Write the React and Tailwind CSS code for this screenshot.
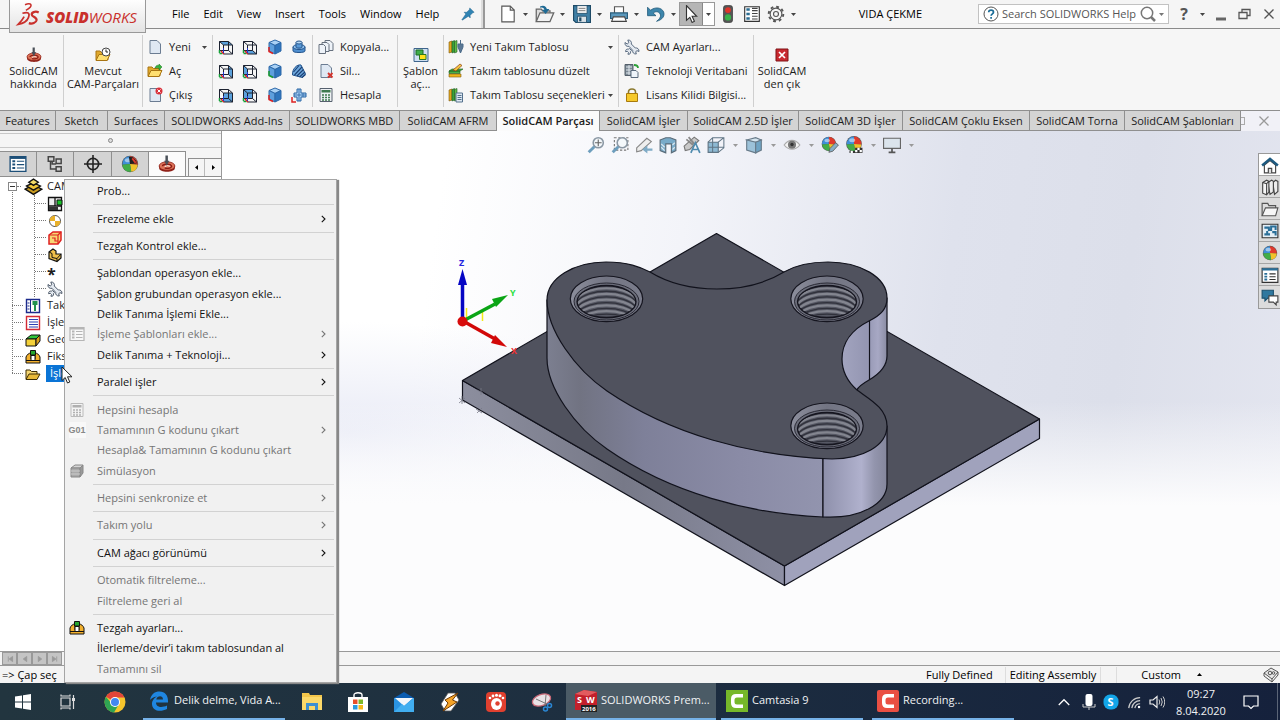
import React from "react";

/* ---------- shared icon helpers ---------- */

function Icon({ size = "size-4", box = "0 0 16 16", children }) {
  return (
    <svg viewBox={box} className={`${size} shrink-0`} fill="none" aria-hidden="true">
      {children}
    </svg>
  );
}

const Caret = ({ className = "text-[#444]" }) => (
  <svg viewBox="0 0 5 3" className={`h-[3px] w-[5px] shrink-0 ${className}`} aria-hidden="true">
    <path d="M0 0h5L2.500 3z" fill="currentColor" />
  </svg>
);

const Page = () => <path d="M3 1.500h7l3.500 3.500v9.500H3z" fill="#dfe8f3" stroke="#6b7c92" />;

const Wrench = ({ stroke = "#5a6b80" }) => (
  <g fill="#e3e9f0" stroke={stroke} strokeWidth="1">
    <path d="M1 3.500l2.200 1.500 1.600-1.300L3.800 1C6.500.800 8 3 7.300 5l4 4c2-.5 3.900 1 3.700 3.500l-2-.8-1.300 1 .6 2.300c-2.500.2-4-1.500-3.600-3.600L5 7.300C2.500 8 .500 6 1 3.500z" />
    <path d="M5.500 9.500l2 2-1 1.200c.5 1.800-1 3-2.600 2.500l.600-1.700-1.200-1.200-1.700.4c-.2-2 1.200-3 2.700-2.500z" />
  </g>
);

const Folder = () => (
  <>
    <path d="M1 13V4h4l1.500 1.500H13V13z" fill="#e0a92c" stroke="#a87412" />
    <path d="M1 13.500L4 7.500h11l-3 6z" fill="#ffdf70" stroke="#a87412" />
  </>
);

function CubeWire({ face }) {
  const faces = {
    top: "M1.500 2.500h9l4 3.500h-9z",
    right: "M10.500 2.500l4 3.500v9l-4-4z",
    front: "M5.500 6h9v9h-9z",
    bottom: "M1.500 11.500h9l4 3.500h-9z",
    left: "M1.500 2.500l4 3.500v9l-4-3.500z",
    back: "M1.500 2.500h9v9h-9z",
  };
  return (
    <Icon>
      <path d={faces[face]} fill="#5ba1dc" />
      <path d="M1.500 2.500h9v9h-9zM5.500 6h9v9h-9zM1.500 2.500l4 3.500M10.500 2.500l4 3.500M10.500 11.500l4 3.500" stroke="#1c2230" />
      <path d="M1.500 11v3M1.500 14.500h3" stroke="#17a03a" strokeWidth="1.500" />
      <path d="M3 12l3 3" stroke="#d22" strokeWidth="1.500" />
      <path d="M5.500 9v5" stroke="#23c" />
    </Icon>
  );
}

function CubeSolid({ axis }) {
  return (
    <Icon>
      <path d="M8 1l6 2.500L8 6.500 2 3.500z" fill="#a9d1f5" stroke="#2d68a8" />
      <path d="M2 3.500l6 3V15l-6-3z" fill="#5e9fdd" stroke="#2d68a8" />
      <path d="M14 3.500l-6 3V15l6-3z" fill="#2f75bd" stroke="#2d68a8" />
      <path d="M2 8v4.500l4 2" stroke={axis} strokeWidth="1.500" />
    </Icon>
  );
}

const Cylinder = () => (
  <Icon>
    <path d="M2 8v4c0 2 12 2 12 0V8z" fill="#4f8fd0" stroke="#24548c" />
    <ellipse cx="8" cy="8" rx="6" ry="2.500" fill="#8dbfec" stroke="#24548c" />
    <path d="M5 3.500V8c0 1.500 6 1.500 6 0V3.500z" fill="#5b9bd8" stroke="#24548c" />
    <ellipse cx="8" cy="3.500" rx="3" ry="1.500" fill="#b9dbf7" stroke="#24548c" />
  </Icon>
);

const Shell = () => (
  <Icon>
    <path d="M1.500 12C1 6 6 1 10 2l4.500 9-3 3.500z" fill="#6ea9de" stroke="#24548c" />
    <path d="M2.500 9L8 2.500M3.500 12L11 4M6 13l6.500-6.500M8.500 14l5.500-5M11 14.500l3.500-3" stroke="#1b3f74" strokeWidth="1.100" />
  </Icon>
);

const CrossPipe = () => (
  <Icon>
    <path d="M6 2h4v4h5v4h-5v4H6v-4H3V6h3z" fill="#a8d0f3" stroke="#2b66a5" />
    <path d="M3 8h12M8 2v12M12 6v4" stroke="#2b66a5" strokeWidth=".8" />
    <path d="M1 10v5h4" stroke="#d22" strokeWidth="1.500" />
  </Icon>
);

const Books = ({ children }) => (
  <Icon>
    <path d="M1 3l3-1v11l-3 1z" fill="#e3a51e" stroke="#7c5b10" strokeWidth=".6" />
    <path d="M4 2.500l2.500-1V13L4 14z" fill="#3aa23c" stroke="#1d5d20" strokeWidth=".6" />
    <path d="M6.500 2.500L9 1.500V13l-2.500 1z" fill="#62bb46" stroke="#1d5d20" strokeWidth=".6" />
    {children}
  </Icon>
);

const Ball = ({ cx = 8, cy = 7.5, r = 6 }) => (
  <g transform={`translate(${cx} ${cy}) scale(${r / 6})`}>
    <circle r="6.400" fill="#555" />
    <path d="M0 0V-6A6 6 0 0 0-6 0.500z" fill="#3f8fd8" />
    <path d="M0 0V-6A6 6 0 0 1 6 .5z" fill="#e03a2c" />
    <path d="M0 0L6 .5A6 6 0 0 1 1 6z" fill="#f1c22a" />
    <path d="M0 0L1 6A6 6 0 0 1-6 .5z" fill="#41ad48" />
    <ellipse cx="-1.500" cy="-3" rx="2.500" ry="1.600" fill="#fff" opacity=".5" />
  </g>
);

const CamMark = ({ size = "size-4" }) => (
  <Icon size={size}>
    <path d="M1 9.500v2c0 4.500 14 4.500 14 0v-2z" fill="#8f2018" />
    <ellipse cx="8" cy="9.800" rx="7" ry="3.800" fill="#dc7358" stroke="#8b1c14" strokeWidth=".7" />
    <path d="M4 10c0-2 7-2.500 8-.5s-4 3-6 2" stroke="#8b1c14" strokeWidth="1.200" />
    <path d="M6 10.500c1-1.200 4-1.200 4.500-.3" stroke="#fbe9e0" />
    <path d="M6.600.5h2.200V5H10l-2.200 4.500L5.500 5h1.100z" fill="#4a5058" />
  </Icon>
);

const Fixture = () => (
  <Icon>
    <path d="M1 14V8c1-2.500 3-4 5-4v6h4V4c2 0 4 1.500 5 4v6z" fill="#f2b02e" stroke="#111" />
    <path d="M1 11.500h14" stroke="#111" />
    <path d="M5.500 1.500h5V6h-5z" fill="#25a52e" stroke="#111" />
    <path d="M6 6.500h4v5H6z" fill="#fff" stroke="#111" />
  </Icon>
);

const ListIcon = ({ color = "#1d4f78", bg = "#fff", size = "size-4" }) => (
  <Icon size={size}>
    <path d="M1 1.500h14v13H1z" fill={bg} stroke={color} strokeWidth="1.200" />
    <path d="M1 2.500h14" stroke={color} strokeWidth="2" />
    <path d="M3 5.500h2.500M3 8.500h2.500M3 11.500h2.500" stroke={color} strokeWidth="1.800" />
    <path d="M7 5.500h6.500M7 8.500h6.500M7 11.500h6.500" stroke={color} />
  </Icon>
);

const Calculator = ({ color = "#3f7a4f", line = "#56606e", bg = "#eef1f4" }) => (
  <Icon>
    <path d="M2 1.500h12v13H2z" fill={bg} stroke={line} />
    <path d="M3.500 3h9v2.500h-9z" fill={color} />
    <path d="M4 8h2M7 8h2M10 8h2M4 10.500h2M7 10.500h2M10 10.500h2M4 13h2M7 13h2M10 13h2" stroke={color} strokeWidth="1.300" />
  </Icon>
);

/* ---------- title bar ---------- */

const menus = ["File", "Edit", "View", "Insert", "Tools", "Window", "Help"];

const NewDoc = () => <Icon size="size-[18px]"><path d="M2.500 1h7.500l3.500 3.500V15h-11z" fill="#fff" stroke="#555" /><path d="M10 1v3.500h3.500" stroke="#555" /></Icon>;
const OpenDoc = () => (
  <Icon size="size-5">
    <path d="M1 14V4h4l1 1.500h6V7" fill="#ddd" stroke="#666" />
    <path d="M1 14L4 7h11l-3 7z" fill="#f2f2f2" stroke="#666" />
    <path d="M4 2c3-1.500 5 0 5.500 2h2L8.500 8 5.500 4.500h2C7 3 6 2.500 4 3z" fill="#1f6a94" />
  </Icon>
);
const SaveDoc = () => (
  <Icon size="size-[18px]">
    <path d="M.500.500h15v15h-13l-2-2z" fill="#3f7fa5" stroke="#1e4a66" />
    <path d="M3.500.500h9v7h-9z" fill="#f3f3f3" stroke="#1e4a66" strokeWidth=".7" />
    <path d="M5 3h6M5 5h6" stroke="#777" strokeWidth=".8" />
    <path d="M4 10h8v5.500H4z" fill="#d9e1e6" stroke="#1e4a66" strokeWidth=".7" /><path d="M5.500 11h2v3.500h-2z" fill="#1e4a66" />
  </Icon>
);
const PrintDoc = () => (
  <Icon size="size-[18px]">
    <path d="M4 7V1.500h8V7" fill="#fff" stroke="#555" />
    <path d="M.500 7h15v5H.500z" fill="#5b99bd" stroke="#2b5d7b" />
    <path d="M3 10.500h10l1.500 4h-13z" fill="#fff" stroke="#444" />
  </Icon>
);
const Undo = () => <Icon size="size-[18px]"><path d="M.500 2v7.500H8L5.500 7.200C8 5 11.500 6 12 9c.2 2-1 3.500-3.500 5.500C14 13 16 9.500 14.800 6.200 13 2 7 1.500 3.200 4.700z" fill="#3d86ac" stroke="#1f5878" strokeWidth=".7" /></Icon>;

function TitleTool({ label, children }) {
  return (
    <div className="flex w-[37px] items-center gap-[5px]">
      <button aria-label={label} className="flex w-5 justify-center">{children}</button>
      <button aria-label={`${label} options`} className="py-2"><Caret /></button>
    </div>
  );
}

function TitleBar() {
  return (
    <header className="relative z-10 flex h-[29px] shrink-0 items-center border-b border-[#8a8a8a] bg-[#f5f5f5]">
      <div className="absolute top-0 left-[9px] flex h-[33px] w-[137px] items-center gap-[5px] border border-t-0 border-[#999] bg-linear-to-b from-[#fefefe] to-[#e3e3e3] pt-[2px] pl-[5px]">
        <svg viewBox="0 0 27 28" className="h-7 w-[26px] shrink-0 pb-1" fill="none" stroke="#c9302c" aria-hidden="true">
          <path d="M10 2c5-2 9-1 6 3-1.500 2-4 3-5 3.500" strokeWidth="1.800" />
          <path d="M7 12c7-2 9 0 7 5-1.500 4-7 7-12 8 3-3 6-7 7-9" strokeWidth="2" />
          <path d="M26 11c-4-2-9 0-8 3 .6 2 6 2.500 5.500 6-.5 3-5 5-9 3.500" strokeWidth="2.600" />
        </svg>
        <span className="text-[15px] leading-5 text-[#c9302c] italic"><b className="font-extrabold">SOLID</b><span>WORKS</span></span>
      </div>
      <nav className="ml-[172px] flex gap-[14px] text-[11px] text-black" aria-label="Main menu">
        {menus.map((m) => <button key={m}>{m}</button>)}
      </nav>
      <div className="ml-[22px] flex items-center">
        <button aria-label="Pin menu">
          <Icon size="size-[14px]"><path d="M10 1l5 5-1.500.5-3 3v3l-2-2L1.500 15l-.5-.5L5.500 8 3.500 6h3l3-3z" fill="#2f83b3" stroke="#1f5f88" strokeWidth=".5" /></Icon>
        </button>
      </div>
      <div className="ml-[6px] h-7 w-1 border-r-2 border-[#999] bg-[#ddd]" />
      <div className="ml-[13px] flex items-center">
        <TitleTool label="New"><NewDoc /></TitleTool>
        <TitleTool label="Open"><OpenDoc /></TitleTool>
        <TitleTool label="Save"><SaveDoc /></TitleTool>
        <TitleTool label="Print"><PrintDoc /></TitleTool>
        <TitleTool label="Undo"><Undo /></TitleTool>
        <div className="-ml-1 flex h-6 w-9 border border-[#999]">
          <button aria-label="Select" className="flex flex-1 items-center justify-center border-r border-[#888] bg-[#b5b5b5]">
            <Icon size="size-[18px]"><path d="M4 .500v13l3-2.500 2 4.500 2-1L9 10h4z" fill="#fff" stroke="#333" /></Icon>
          </button>
          <button aria-label="Select options" className="flex w-[11px] items-center justify-center bg-white"><Caret /></button>
        </div>
        <button aria-label="Rebuild" className="ml-1 w-6"><Icon size="size-[18px]"><path d="M4 2.500Q4 .500 6 .500h4q2 0 2 2v11q0 2-2 2H6q-2 0-2-2z" fill="#555" stroke="#444" strokeWidth=".7" /><circle cx="8" cy="4.500" r="2.600" fill="#e0342a" /><circle cx="8" cy="11" r="2.800" fill="#38b24a" /></Icon></button>
        <button aria-label="Properties" className="w-6"><Icon size="size-[18px]"><path d="M1.500 1.500h13v13h-13z" fill="#fff" stroke="#333" /><path d="M3 4h3M3 8h3M3 12h3" stroke="#2c6e93" strokeWidth="2.200" /><path d="M8 3h5M8 5h5M8 7.500h5M8 10h5M8 12.500h5" stroke="#444" strokeWidth=".9" /></Icon></button>
        <button aria-label="Options" className="flex w-6 items-center">
          <Icon size="size-[18px]"><circle cx="8" cy="8" r="5.200" stroke="#555" /><circle cx="8" cy="8" r="6.500" stroke="#555" strokeWidth="1.700" strokeDasharray="2.500 2.600" /><circle cx="8" cy="8" r="2.200" stroke="#555" /></Icon>
        </button>
        <button aria-label="Options menu"><Caret /></button>
      </div>
      <h1 className="mr-[56px] ml-auto text-[11px] text-black">VIDA ÇEKME</h1>
      <label className="flex h-5 w-[191px] items-center gap-[3px] border border-[#c2c2c2] bg-white px-[4px] text-[#555]">
        <Icon><circle cx="8" cy="8" r="7" fill="#fff" stroke="#555" /><path d="M5.700 6.300c0-3 4.800-3 4.800 0 0 1.500-2.400 1.700-2.400 3.500M8.100 11v1.700" stroke="#1c6d98" strokeWidth="1.700" /></Icon>
        <input className="w-0 min-w-0 flex-1 bg-transparent text-[11px] outline-none placeholder:text-[#555]" placeholder="Search SOLIDWORKS Help" aria-label="Search SOLIDWORKS Help" />
        <Icon><circle cx="7" cy="7" r="5.700" stroke="#777" strokeWidth="1.500" /><path d="M11 11l4 4" stroke="#777" strokeWidth="2.500" /></Icon>
        <Caret className="text-[#777]" />
      </label>
      <div className="ml-[7px] flex items-center text-[#555]">
        <button className="w-4 text-[16px] leading-5 font-bold" aria-label="Help">?</button>
        <button className="ml-2 w-[11px]" aria-label="Help menu"><Caret /></button>
        <button aria-label="Minimize" className="ml-[2px]"><Icon><path d="M3 13h10" stroke="#666" strokeWidth="3" /></Icon></button>
        <button aria-label="Restore" className="ml-2"><Icon><path d="M2 6.500h8v6H2zM5 6V3.500h8v6h-3" stroke="#555" strokeWidth="1.300" /></Icon></button>
        <button aria-label="Close" className="mr-[3px] ml-2"><Icon><path d="M3.500 3.500l9 9M12.500 3.500l-9 9" stroke="#555" strokeWidth="1.300" /></Icon></button>
      </div>
    </header>
  );
}

/* ---------- ribbon ---------- */

function BigButton({ icon, lines, className }) {
  return (
    <button className={`flex flex-col items-center justify-start gap-px pt-3 text-[11px] leading-[13px] ${className}`}>
      {icon}
      <span className="whitespace-nowrap">{lines[0]}<br />{lines[1]}</span>
    </button>
  );
}

function RowButton({ icon, text, caret }) {
  return (
    <button className="flex h-6 items-center text-[11px] whitespace-nowrap">
      {icon}
      <span className="ml-[6px]">{text}</span>
      {caret && <span className="ml-auto"><Caret /></span>}
    </button>
  );
}

function Ribbon() {
  return (
    <section className="flex h-[81px] shrink-0 bg-[#f6f6f6] pt-[6px] pb-[3px]" aria-label="SolidCAM commands">
      <BigButton className="w-16 border-r border-[#cfcfcf] pl-1" icon={<CamMark />} lines={["SolidCAM", "hakkında"]} />
      <BigButton className="w-[79px] border-r border-[#cfcfcf]" icon={<Icon><Folder /><circle cx="11" cy="5" r="4" fill="#fff" stroke="#444" /><path d="M11 2.500V5h2" stroke="#222" /></Icon>} lines={["Mevcut", "CAM-Parçaları"]} />
      <div className="flex w-[70px] flex-col border-r border-[#cfcfcf] pr-[5px] pl-1">
        <RowButton caret text="Yeni" icon={<Icon><Page /></Icon>} />
        <RowButton text="Aç" icon={<Icon><Folder /><path d="M8 5c1-3 3-3 4-2.500V1l3 3-3 3V5c-1-.5-2 0-4 0z" fill="#35b33c" stroke="#19731d" strokeWidth=".5" /></Icon>} />
        <RowButton text="Çıkış" icon={<Icon><Page /><circle cx="12" cy="4" r="3.500" fill="#d9303a" /><path d="M10.500 2.500l3 3M13.500 2.500l-3 3" stroke="#fff" /></Icon>} />
      </div>
      <div className="grid w-[100px] grid-cols-4 grid-rows-[24px_24px_24px] place-items-center border-r border-[#cfcfcf] px-px">
        <CubeWire face="top" /><CubeWire face="bottom" /><CubeSolid axis="#d22" /><Cylinder />
        <CubeWire face="right" /><CubeWire face="left" /><CubeSolid axis="#1a9a2e" /><Shell />
        <CubeWire face="front" /><CubeWire face="back" /><CubeSolid axis="#d22" /><CrossPipe />
      </div>
      <div className="flex w-[85px] flex-col border-r border-[#cfcfcf] pl-[5px]">
        <RowButton text="Kopyala..." icon={<Icon><path d="M7 1.500h5l3 3v7H7z" fill="#eef3f9" stroke="#66707e" /><path d="M4 3.500h5l2 2v7H4z" fill="#eef3f9" stroke="#66707e" /><path d="M1 5.500h4.500l2 2v7H1z" fill="#eef3f9" stroke="#66707e" /></Icon>} />
        <RowButton text="Sil..." icon={<Icon><Page /><path d="M10 10l4.500 4.500M14.500 10L10 14.500" stroke="#d3342c" strokeWidth="1.800" /></Icon>} />
        <RowButton text="Hesapla" icon={<Calculator />} />
      </div>
      <BigButton className="w-[46px] border-r border-[#cfcfcf]" icon={<Icon><path d="M1 1.500h14v13H1z" fill="#cfe0f3" stroke="#3f658c" /><path d="M3 3h7v5H3z" fill="#3fae49" stroke="#1e6a28" /><path d="M6.500 7.500H13v5H6.500z" fill="#ffe11a" stroke="#2a7a1e" /></Icon>} lines={["Şablon", "aç..."]} />
      <div className="flex w-[175px] flex-col border-r border-[#cfcfcf] pr-[5px] pl-1">
        <RowButton caret text="Yeni Takım Tablosu" icon={<Books><path d="M12.500 1v4M10 5h5v3l-2.500 6L10 8z" fill="#5a7896" stroke="#4a6a88" /></Books>} />
        <RowButton text="Takım tablosunu düzelt" icon={<Icon><path d="M1 8l3-2h11l-3 2zM1 8h11v2.500H1z" fill="#49b045" stroke="#1d5d20" strokeWidth=".6" /><path d="M1 11h12v3H1z" fill="#f0b41c" stroke="#7c5b10" strokeWidth=".6" /><path d="M5 7l7-6 2 1.500-6 5.500z" fill="#f4c542" stroke="#8a3d14" strokeWidth=".7" /></Icon>} />
        <RowButton caret text="Takım Tablosu seçenekleri" icon={<Books><path d="M8 6h6.500v9H8z" fill="#dfe9f3" stroke="#54708c" /><path d="M9.500 8.500h4M9.500 10.500h4M9.500 12.500h4" stroke="#54708c" /></Books>} />
      </div>
      <div className="flex w-[135px] flex-col border-r border-[#cfcfcf] pl-[5px]">
        <RowButton text="CAM Ayarları..." icon={<Icon><Wrench /></Icon>} />
        <RowButton text="Teknoloji Veritabani" icon={<Icon><path d="M1 1.500h8v11H1z" fill="#7b8894" stroke="#55606b" /><path d="M2 4h6M2 7h6M2 10h6M5 2v10" stroke="#dfe6ec" /><path d="M7 7.500h5l2 2v5H7z" fill="#eef4fa" stroke="#5b6b7d" /><path d="M10 2c3 0 4 1 4 3" stroke="#2ca038" strokeWidth="1.800" /></Icon>} />
        <RowButton text="Lisans Kilidi Bilgisi..." icon={<Icon><path d="M4.500 7V5c0-4 7-4 7 0v2" stroke="#8c7a30" strokeWidth="1.600" /><path d="M2.500 6.500h11v8h-11z" fill="#f6c92b" stroke="#a87a0c" /></Icon>} />
      </div>
      <BigButton className="w-14" icon={<Icon><path d="M2 2h12v12H2z" fill="#c9282f" stroke="#7e1317" /><path d="M5 5l6 6M11 5l-6 6" stroke="#fff" strokeWidth="1.700" /></Icon>} lines={["SolidCAM", "den çık"]} />
    </section>
  );
}

const tabs = [
  ["Features", "w-14"], ["Sketch", "w-[52px]"], ["Surfaces", "w-[57px]"], ["SOLIDWORKS Add-Ins", "w-[125px]"],
  ["SOLIDWORKS MBD", "w-[110px]"], ["SolidCAM AFRM", "w-[97px]"], ["SolidCAM Parçası", "w-[103px]"],
  ["SolidCAM İşler", "w-[88px]"], ["SolidCAM 2.5D İşler", "w-[111px]"], ["SolidCAM 3D İşler", "w-[104px]"],
  ["SolidCAM Çoklu Eksen", "w-[127px]"], ["SolidCAM Torna", "w-[95px]"], ["SolidCAM Şablonları", "w-[116px]"],
];

function TabStrip() {
  return (
    <div className="flex h-[21px] shrink-0 border-t border-[#8f8f8f] bg-[#f1f1f7]" role="tablist">
      {tabs.map(([name, width]) => {
        const active = name === "SolidCAM Parçası";
        return (
          <button key={name} role="tab" aria-selected={active}
            className={`shrink-0 border-r border-[#8f8f8f] text-center text-[11px] leading-[18px] whitespace-nowrap ${width} ${active ? "bg-[#fbfbfb] font-semibold" : "border-b bg-[#d4d4d4]"}`}>
            {name}
          </button>
        );
      })}
      <div className="flex flex-1 items-center justify-between pr-2">
        <span className="h-2 w-1 border border-l-0 border-[#aaa]" />
        <button aria-label="Close document"><Icon><path d="M3.500 3.500l9 9M12.500 3.500l-9 9" stroke="#999" strokeWidth="1.300" /></Icon></button>
      </div>
    </div>
  );
}

/* ---------- CAM tree ---------- */

const panelTabs = [
  ["Feature tree", <ListIcon key="i" size="size-[18px]" />],
  ["Properties", <Icon key="i" size="size-[18px]"><path d="M2 1.500h5v4H2zM9 3.500h4.500v4H9zM9 10.500h4.500v4H9zM4 5.500v7h5M5.500 5.500v2.500H9" stroke="#444" strokeWidth="1.300" /></Icon>],
  ["Configurations", <Icon key="i" size="size-[18px]"><circle cx="8" cy="8" r="5" stroke="#222" strokeWidth="1.500" /><path d="M8 0v16M0 8h16" stroke="#222" strokeWidth="1.400" /></Icon>],
  ["Appearance", <Icon key="i" size="size-[18px]"><Ball cy={8} r={6.8} /><path d="M8 8l-1-6.500 3.500.5 3 3 .5 2.500z" fill="#222" /><path d="M10 3l3 4" stroke="#e03a2c" strokeWidth="1.500" /></Icon>],
  ["SolidCAM", <CamMark key="i" size="size-[18px]" />],
];

const camNodes = [
  <Icon key="a"><path d="M1.500 1.500h13v13h-13zM8 1v9M1 10h14" fill="#eee" stroke="#111" strokeWidth="1.300" /><path d="M2 11h9v3H2z" fill="#333" /><path d="M10 4h5v5h-5z" fill="#18c428" stroke="#111" /></Icon>,
  <Icon key="b"><circle cx="8" cy="8" r="5.500" fill="#fff" stroke="#555" /><path d="M8 8V2.500A5.500 5.500 0 0 0 2.500 8zM8 8v5.500A5.500 5.500 0 0 0 13.500 8z" fill="#e8b02a" /></Icon>,
  <Icon key="c"><path d="M2 5l4-3h8v8l-3 4H2z" fill="#f7d774" stroke="#e02020" strokeWidth="1.500" /><path d="M2 5h9v9M11 5l3-3M5 8h3v3h3" stroke="#e02020" strokeWidth="1.200" /></Icon>,
  <Icon key="d"><path d="M2 5l4-3 3 2v3h5v4l-4 3.500-8-3z" fill="#f0c04a" stroke="#111" strokeWidth="1.200" /><path d="M2 5l3 1.500v4l5 1V14M10 11.500L14 7" stroke="#111" /></Icon>,
  null,
  <Icon key="f"><Wrench stroke="#4f5b6b" /></Icon>,
];

const rootNodes = [
  ["Tak", <Icon key="a"><path d="M1.500 1.500h13v13h-13z" fill="#fff" stroke="#1c2b8c" strokeWidth="1.400" /><path d="M5.500 2v12M2.500 5h2M2.500 8h2M2.500 11h2" stroke="#1c2b8c" /><path d="M7.500 3h5v4h-1.500v6h-2V7H7.500z" fill="#21924f" /></Icon>],
  ["İşle", <Icon key="b"><path d="M1.500 1.500h13v13h-13z" fill="#fff" stroke="#d22a35" strokeWidth="1.400" /><path d="M4 4.500h9M4 7h9M4 9.500h9M4 12h9" stroke="#2d3fb5" /></Icon>],
  ["Geo", <Icon key="c"><path d="M1 7l5-4h9l-4 4z" fill="#2fc43a" stroke="#111" /><path d="M1 7h10v7H1z" fill="#f4d13a" stroke="#111" /><path d="M11 7l4-4v6l-4 5z" fill="#d79d18" stroke="#111" /></Icon>],
  ["Fiks", <Fixture key="d" />],
];

function SidePanel() {
  return (
    <aside className="flex w-[222px] shrink-0 flex-col border-r border-[#999] bg-[#f5f5f5]">
      <div className="my-[2px] flex h-[15px] shrink-0 items-center justify-center border-y border-[#c8c8c8]">
        <span className="size-[5px] rounded-full border border-[#888] bg-[#ddd]" />
      </div>
      <div className="flex h-[27px] shrink-0 items-end border-b border-[#8f8f8f]" role="tablist" aria-label="Manager">
        <div className="flex w-[188px]">
          {panelTabs.map(([name, icon], i) => (
            <button key={name} role="tab" aria-label={name} aria-selected={i === 4}
              className={`flex h-[25px] flex-1 items-center justify-center border-t border-r border-[#8f8f8f] ${i === 4 ? "bg-[#fbfbfb]" : "bg-[#d3d3d3]"}`}>
              {icon}
            </button>
          ))}
        </div>
        <div className="ml-[2px] flex h-[18px] flex-1 border-t border-l border-[#8f8f8f]">
          <button aria-label="Previous tabs" className="flex w-4 items-center justify-center border-r border-[#bbb]"><svg viewBox="0 0 3 5" className="h-[5px] w-[3px]"><path d="M3 0v5L0 2.500z" /></svg></button>
          <button aria-label="Next tabs" className="flex w-4 items-center justify-center"><svg viewBox="0 0 3 5" className="h-[5px] w-[3px]"><path d="M0 0v5l3-2.500z" /></svg></button>
        </div>
      </div>
      <div className="flex-1 overflow-hidden bg-white pl-[12px] text-[11px]">
        <ul className="relative flex flex-col pt-px before:absolute before:top-[10px] before:left-0 before:h-[186px] before:border-l before:border-dotted before:border-[#777]">
          <li>
            <div className="relative flex h-[17px] items-center">
              <span className="-ml-1 flex size-[9px] items-center justify-center border border-[#888] bg-white"><i className="h-px w-[5px] bg-[#333]" /></span>
              <i className="mr-[3px] w-[4px] border-t border-dotted border-[#777]" />
              <Icon size="size-[19px]" box="0 0 18 16"><path d="M1 10.500l8-4 8 4-8 5z" fill="#c89a20" stroke="#111" strokeWidth="1.300" /><path d="M2.500 7.500l6.500-3 6.500 3-6.500 4z" fill="#f0c63a" stroke="#111" strokeWidth="1.300" /><path d="M4.500 4l4.500-3 4.500 3L9 7z" fill="#f3dc6a" stroke="#111" strokeWidth="1.300" /></Icon>
              <span className="ml-1">CAM</span>
            </div>
            <ul className="ml-[22px] border-l border-dotted border-[#777]">
              {camNodes.map((icon, i) => (
                <li key={i} className="flex h-[17px] items-center">
                  <i className="mr-px w-[11px] border-t border-dotted border-[#777]" />
                  {icon || <b className="pt-1 text-base leading-4">*</b>}
                </li>
              ))}
            </ul>
          </li>
          {rootNodes.map(([name, icon]) => (
            <li key={name} className="flex h-[17px] items-center">
              <i className="mr-[2px] w-[11px] border-t border-dotted border-[#777]" />{icon}
              <span className="ml-[6px]">{name}</span>
            </li>
          ))}
          <li className="flex h-[17px] items-center">
            <i className="mr-[2px] w-[11px] border-t border-dotted border-[#777]" />
            <Icon><path d="M1 13V4h4l1.500 1.500H12V8" fill="#f5d673" stroke="#3c2d05" /><path d="M1 13.500L4 8h11l-3 5.500z" fill="#e8b93a" stroke="#3c2d05" /></Icon>
            <span className="ml-[5px] bg-[#0a74d6] pr-2 pl-1 text-white">İşle</span>
          </li>
        </ul>
      </div>
    </aside>
  );
}

/* ---------- 3D view ---------- */

function Hole({ x, y }) {
  return (
    <g transform={`translate(${x} ${y})`} stroke="#15151f">
      <ellipse cx="0" cy="-.2" rx="36.200" ry="22.800" fill="url(#sink)" strokeWidth="1.200" />
      <ellipse cx="0" cy="2.500" rx="32.500" ry="18.500" fill="#6c6e7b" strokeWidth=".8" />
      <ellipse cx="0" cy="2.700" rx="29.300" ry="16" fill="#555763" strokeWidth="1.700" />
      <g clipPath="url(#bore)" fill="none">
        {[-7, -1.3, 4.4, 10.1, 15.8].map((d) => (
          <g key={d}>
            <path d={`M-29 ${d + 6}C-18 ${d - 7} 18 ${d - 7} 29 ${d + 6}`} stroke="#83858f" strokeWidth="2.200" />
            <path d={`M-29 ${d + 9}C-18 ${d - 4} 18 ${d - 4} 29 ${d + 9}`} stroke="#30313b" strokeWidth="1.300" />
          </g>
        ))}
      </g>
    </g>
  );
}

function Model() {
  return (
    <svg viewBox="222 131 1058 520" className="absolute inset-0 size-full" role="img" aria-label="Threaded plate assembly">
      <defs>
        <linearGradient id="arcSide" gradientUnits="userSpaceOnUse" x1="547" y1="0" x2="823" y2="0">
          <stop offset="0" stopColor="#7c7f90" /><stop offset=".12" stopColor="#717382" /><stop offset=".35" stopColor="#7e8099" /><stop offset=".7" stopColor="#8a8ba6" /><stop offset="1" stopColor="#9294ae" />
        </linearGradient>
        <linearGradient id="endSide" gradientUnits="userSpaceOnUse" x1="823" y1="0" x2="887" y2="0">
          <stop offset="0" stopColor="#8e90ab" /><stop offset=".6" stopColor="#b0b1cd" /><stop offset=".8" stopColor="#9395ad" /><stop offset="1" stopColor="#84869c" />
        </linearGradient>
        <linearGradient id="notch" gradientUnits="userSpaceOnUse" x1="842" y1="0" x2="887" y2="0">
          <stop offset="0" stopColor="#a2a4bf" /><stop offset=".55" stopColor="#9496b2" /><stop offset=".8" stopColor="#a7a8c4" /><stop offset="1" stopColor="#8a8ca3" />
        </linearGradient>
        <linearGradient id="plateL" x1="0" y1="0" x2="1" y2="0"><stop offset="0" stopColor="#8c8e9e" /><stop offset=".5" stopColor="#777988" /><stop offset="1" stopColor="#8e90a5" /></linearGradient>
        <linearGradient id="sink" x1="0" y1="0" x2="1" y2="0"><stop offset="0" stopColor="#8c8e9c" /><stop offset=".5" stopColor="#727482" /><stop offset="1" stopColor="#7b7d8c" /></linearGradient>
        <clipPath id="bore"><ellipse cx="0" cy="2.700" rx="28.800" ry="15.500" /></clipPath>
      </defs>
      <g stroke="#11121c" strokeWidth="1.200" strokeLinejoin="round">
        <path d="M462.500 380.500L784.500 566V585.500L462.500 400z" fill="url(#plateL)" />
        <path d="M784.500 566L1039.500 419V438.500L784.500 585.500z" fill="#a0a2bc" />
        <path d="M716.500 233.500L1039.500 419 784.500 566 462.500 380.500z" fill="#50525e" />
        <path d="M547 300V358C547 388 575 427 607 449C670 493 750 514 823 517V458.500L620 330z" fill="url(#arcSide)" />
        <path d="M823 458.500V517C860 519 887 504 887 484V426z" fill="url(#endSide)" />
        <path d="M887 298V356C887 366 881 373 869 380C862 384 858 387 857 390L830 380L842 315z" fill="url(#notch)" />
        <path d="M869.500 320V380" />
        <path d="M547 300C547 278 574 262 606 262C628 262 640 267 650 272C668 283 692 289 717 289C744 289 766 283 784 272C796 265 811 262 828 262C860 262 887 277 887 298C887 309 881 315 869 321C853 329 842 342 842 359C842 372 848 382 857 390C869 399 887 408 887 426C887 446 862 459 832 459C750 456 670 434 607 391C575 369 547 330 547 300z" fill="#50525e" />
      </g>
      <Hole x={606.5} y={299} />
      <Hole x={827} y={299} />
      <Hole x={827} y={426} />
      <path d="M459 398l6 5M465 398l-6 5M462 396v8M476 409l6 4M482 408l-5 5M477 390l6 3M481 388v7" stroke="#777986" strokeWidth=".8" />
      <path d="M466.500 308v12M482.500 311v10" stroke="#f3ea18" strokeWidth="1.500" />
      <path d="M462.500 320V282" stroke="#0606c4" strokeWidth="3.500" />
      <path d="M462.500 269l4.500 16h-9z" fill="#0606c4" />
      <path d="M463 321l32-17" stroke="#0ba516" strokeWidth="3.500" />
      <path d="M508 295l-12 12-4-8z" fill="#0ba516" />
      <path d="M463 321l32 18" stroke="#d20808" strokeWidth="3.500" />
      <path d="M507 347l-16-4 4-8z" fill="#d20808" />
      <circle cx="462.500" cy="321.500" r="5" fill="#d80c0c" />
      <g className="text-[9px] font-bold">
        <text x="459" y="266" fill="#2424e0">Z</text><text x="510" y="296" fill="#2be03c">Y</text><text x="511" y="354" fill="#e33">X</text>
      </g>
    </svg>
  );
}

const Glass = () => (<><circle cx="10" cy="6" r="4.500" fill="#f4f8fb" stroke="#8b98a4" strokeWidth="1.400" /><path d="M6.500 9.500l-5 5" stroke="#6d9ebd" strokeWidth="2.600" /></>);
const viewTools = [
  ["Zoom to fit", <><Glass /><path d="M10 3v6M7 6h6" stroke="#666" /></>],
  ["Zoom to area", <><path d="M3 1.500h12v11H3z" stroke="#777" strokeDasharray="2 1.500" /><Glass /></>],
  ["Previous view", <><path d="M1.500 10.500l9-8.500 4 3-9 8-4 1z" fill="#eee" stroke="#888" /><path d="M15.500 11H11V8.500L6.500 12l4.500 3.500V13h4.500z" fill="#7fabc6" /></>],
  ["Section view", <><path d="M1 3.500l5-2h4l5 2V13l-4 2V7H6v8l-5-2z" fill="#79abc9" stroke="#5b6c79" /><path d="M2 7l3 3M2 10l3 3M12 8l2-2M12 12l2-2" stroke="#dfeaf2" /></>],
  ["Dynamic views", <><path d="M1 9l9-8 4 3-8 8-4 1z" fill="#c9c9c9" stroke="#777" /><path d="M3 3l6 5M5 1l5 6" stroke="#888" strokeWidth="1.500" /><path d="M7 15l4-9 4 9M9 12h4" stroke="#4f8bae" strokeWidth="1.500" /></>],
  ["View orientation", <><path d="M1 5.500h9v9H1z" fill="#8db9d3" stroke="#607585" /><path d="M1 5.500L5 1.500h10v9l-5 4M10 5.500l5-4M5 1.500v13M1 10h14" stroke="#607585" strokeWidth=".9" /></>, true],
  ["Display style", <><path d="M1.500 3.500l8-2 5 2-5 2.500z" fill="#d6e6f0" stroke="#687b8a" /><path d="M1.500 3.500l8 2V15l-8-2.500z" fill="#9cc2d9" stroke="#687b8a" /><path d="M14.500 3.500l-5 2V15l5-2.500z" fill="#6fa4c4" stroke="#687b8a" /></>, true],
  ["Hide or show items", <><path d="M1 8c4-5.500 10-5.500 14 0-4 5-10 5-14 0z" fill="#f4f4f4" stroke="#aaa" /><circle cx="8" cy="7.800" r="3.600" fill="#777" /><circle cx="8" cy="7.500" r="1.500" fill="#333" /></>, true],
  ["Edit appearance", <><Ball cx={7} cy={7} r={6} /><path d="M7 14.500l1-3.500 5-5 2.500 2-5 5.500z" fill="#86aec6" stroke="#555" strokeWidth=".7" /></>],
  ["Apply scene", <><Ball cx={8} cy={7} r={6.5} /><path d="M9 10.500h6.500V15H4v-2h5z" fill="#333" /><path d="M9 12.500h2v2H9zM13 12.500h2v2h-2zM11 10.500h2v2h-2zM5 13h2v2H5z" fill="#fff" /></>, true],
  ["View settings", <><path d="M.5 2h15v9H.5z" fill="#dbe4ec" stroke="#666" /><path d="M8 11v3M5 14.500h6" stroke="#555" strokeWidth="1.500" /></>, true],
];

const taskPane = [
  ["Home", <><path d="M3 8v7h10V8L8 4z" fill="#fff" stroke="#444" /><path d="M6.500 15v-4h3v4" fill="#ddd" stroke="#444" /><path d="M1 8.500l7-6 7 6" stroke="#1d5a80" strokeWidth="2.200" /></>],
  ["Design library", <><path d="M10.500 4L13 2l2 1v9L12 14.500z" fill="#eee" stroke="#444" /><path d="M6 4l3.500-2L11 3v9.500L8 14.500z" fill="#eee" stroke="#444" /><path d="M1.500 4l3.500-2L7 3v9.500L5 15l-3.500-1.500zM1.500 4L5 5v10M5 5l2-2" fill="#f6f6f6" stroke="#444" /></>],
  ["File explorer", <><path d="M1 14V3h5l1 2h6v2" fill="#ddd" stroke="#555" /><path d="M1 14L4 7h11l-2 7z" fill="#f6f6f6" stroke="#555" /></>],
  ["View palette", <><path d="M1 2h14v12H1z" fill="#e4eef5" stroke="#333" /><path d="M3 5h4v2h2V4h4v3M3 11h5M5.500 8v3M10 9h3v3" stroke="#2a6f98" strokeWidth="1.800" /></>],
  ["Appearances", <Ball cy={8} r={6} />],
  ["Custom properties", <><path d="M1 2h14v12.500H1z" fill="#fff" stroke="#333" /><path d="M1 3h14" stroke="#2a6f98" strokeWidth="2" /><path d="M3 7h2.500M3 9.500h2.500M3 12h2.500" stroke="#2a6f98" strokeWidth="1.600" /><path d="M7.500 7H13M7.500 9.500H13M7.500 12H13" stroke="#333" /></>],
  ["Forum", <><path d="M1 2h10v7H6l-2.500 2.500V9H1z" fill="#2f789f" stroke="#1d5270" /><path d="M7 7h8v5.500h-1.500V15L11 12.500H7z" fill="#fff" stroke="#444" /></>],
];

function Viewport() {
  return (
    <main className="relative flex flex-1 justify-between bg-[linear-gradient(to_bottom,transparent_52%,#fcfcfd_72%),radial-gradient(ellipse_at_12%_58%,#e9ebf6_0%,transparent_26%),linear-gradient(98deg,#ffffff_20%,#f3f4f9_42%,#dfe2ed_66%,#dcdfea_82%,#e4e6f0_100%)]">
      <Model />
      <div className="relative flex h-[28px] items-center pl-[362px]" role="toolbar" aria-label="View">
        {viewTools.map(([name, art, caret]) => (
          <React.Fragment key={name}>
            <button aria-label={name} className="flex w-6 shrink-0 justify-center"><Icon size="size-[18px]">{art}</Icon></button>
            {caret && <button aria-label={`${name} options`} className="flex w-[14px] shrink-0 justify-center py-1"><Caret className="text-[#999]" /></button>}
          </React.Fragment>
        ))}
      </div>
      <div className="relative mt-[22px] flex w-[22px] flex-col self-start border border-r-0 border-[#999]">
        {taskPane.map(([name, art], i) => (
          <button key={name} aria-label={name} className={`flex h-[22px] items-center justify-center border-b border-[#a5a5a5] last:border-b-0 ${i === 0 ? "bg-white" : "bg-[#dcdcdc]"}`}>
            <Icon size="size-[18px]">{art}</Icon>
          </button>
        ))}
      </div>
    </main>
  );
}

/* ---------- context menu ---------- */

const groups = [
  [{ t: "Prob..." }],
  [{ t: "Frezeleme ekle", sub: true }],
  [{ t: "Tezgah Kontrol ekle..." }],
  [
    { t: "Şablondan operasyon ekle..." },
    { t: "Şablon grubundan operasyon ekle..." },
    { t: "Delik Tanıma İşlemi Ekle..." },
    { t: "İşleme Şablonları ekle...", sub: true, off: true, icon: <ListIcon color="#b5b5b5" bg="#f8f8f8" /> },
    { t: "Delik Tanıma + Teknoloji...", sub: true },
  ],
  [{ t: "Paralel işler", sub: true }],
  [
    { t: "Hepsini hesapla", off: true, icon: <Calculator color="#b0b0b0" line="#bbb" bg="#f4f4f4" /> },
    { t: "Tamamının G kodunu çıkart", sub: true, off: true, icon: <b className="bg-[#f8f8f8] font-[Liberation_Sans,sans-serif] text-[9px] text-[#888]">G01</b> },
    { t: "Hesapla& Tamamının G kodunu çıkart", off: true },
    { t: "Simülasyon", off: true, icon: <Icon><path d="M2 5l4-3h8l-3 3z" fill="#d5d5d5" stroke="#888" /><path d="M2 5h9v9H2z" fill="#aaa" stroke="#888" /><path d="M11 5l3-3v8l-3 4z" fill="#999" stroke="#888" /><path d="M2 8h9M2 11h9" stroke="#ccc" /></Icon> },
  ],
  [{ t: "Hepsini senkronize et", sub: true, off: true }],
  [{ t: "Takım yolu", sub: true, off: true }],
  [{ t: "CAM ağacı görünümü", sub: true }],
  [{ t: "Otomatik filtreleme...", off: true }, { t: "Filtreleme geri al", off: true }],
  [{ t: "Tezgah ayarları...", icon: <Fixture /> }, { t: "İlerleme/devir’i takım tablosundan al" }, { t: "Tamamını sil", off: true }],
];

function ContextMenu() {
  return (
    <div role="menu" className="absolute top-[179px] bottom-[37px] left-16 z-20 flex w-[273px] flex-col border border-[#a5a5a5] bg-[#f1f1f1] pt-px pb-[3px] shadow-[2px_1px_1px_#888]">
      {groups.map((items, g) => (
        <React.Fragment key={g}>
          {g > 0 && <div role="separator" className="flex h-[7px] shrink-0 items-center pr-[2px] pl-7"><i className="h-px flex-1 bg-[#d2d2d2]" /></div>}
          {items.map((it) => (
            <button key={it.t} role="menuitem" disabled={it.off}
              className={`flex min-h-0 flex-1 items-center pr-[10px] pl-1 text-[11px] leading-4 whitespace-nowrap ${it.off ? "text-[#757575]" : "text-[#111]"}`}>
              <span className="mr-3 flex w-4 justify-center">{it.icon}</span>
              {it.t}
              {it.sub && <svg viewBox="0 0 5 8" className="ml-auto h-[8px] w-[5px]" fill="none" stroke="currentColor"><path d="M.8.8L4 4 .8 7.200" strokeWidth="1.100" /></svg>}
            </button>
          ))}
        </React.Fragment>
      ))}
    </div>
  );
}

/* ---------- status bar and taskbar ---------- */

function StatusBar() {
  const arrows = ["M10 3v6L6 6zM5 3v6", "M9 3v6L5 6z", "M5 3v6l4-3z", "M4 3v6l4-3zM9 3v6"];
  return (
    <footer className="shrink-0 bg-[#f4f4f4]">
      <div className="flex h-[14px] border-t border-[#999]">
        <div className="flex pl-[2px]">
          {arrows.map((d) => (
            <button key={d} disabled aria-label="Scroll tabs" className="flex h-[13px] w-[15px] items-center justify-center border border-[#999] bg-[#c4c4c4]">
              <Icon size="size-3" box="0 0 14 12"><path d={d} fill="#999" stroke="#999" /></Icon>
            </button>
          ))}
        </div>
      </div>
      <div className="flex h-[18px] items-center border-t border-[#999] text-[11px] leading-4 text-black">
        <span className="pl-[2px]">=&gt; Çap seç</span>
        <span className="mr-3 ml-auto">Fully Defined</span>
        <span className="border-x border-[#ddd] px-1">Editing Assembly</span>
        <span className="mr-6 w-4 border-r border-[#ddd] leading-4">&nbsp;</span>
        <button className="flex items-center gap-4">Custom <svg viewBox="0 0 5 3" className="h-[3px] w-[5px]"><path d="M0 3h5L2.500 0z" /></svg></button>
        <span className="mr-px ml-[61px]">
          <Icon><path d="M1 6l7-5 7 4-6 7z" fill="#e8e8e8" stroke="#555" /><path d="M1 6v3l8 6v-3M15 5v3l-6 7" stroke="#555" /><circle cx="7" cy="6" r="1.800" stroke="#555" /><circle cx="10.500" cy="6" r="1.300" stroke="#555" /></Icon>
        </span>
      </div>
    </footer>
  );
}

const pinned = [
  ["File Explorer", <><path d="M0 1h7l1 2h12v15H0z" fill="#f3c64b" /><path d="M0 5h20v13H0z" fill="#fbd869" /><path d="M4 18v-7h12v7h-3v-4H7v4z" fill="#3d8fd1" /></>],
  ["Store", <><path d="M6 5V3c0-3 8-3 8 0v2" stroke="#fff" strokeWidth="1.400" /><path d="M0 5h20v15H0z" fill="#fff" /><path d="M5 7.500h4.500V12H5z" fill="#e8502a" /><path d="M10.500 7.500H15V12h-4.500z" fill="#7db928" /><path d="M5 13h4.500v4.500H5z" fill="#2a9be0" /><path d="M10.500 13H15v4.500h-4.500z" fill="#f6b81b" /></>],
  ["Mail", <><path d="M0 6l10-6 10 6-10 8z" fill="#0b5cb0" /><path d="M0 6h20v14H0z" fill="#2a93e2" /><path d="M1 6h18l-9 8z" fill="#f3f6fa" /><path d="M0 20l8-8 2 2 10-8v14z" fill="#41aef0" /></>],
  ["Winamp", <><path d="M8 1h7l4 7-8 11H5L1 12z" fill="#fff" stroke="#555" strokeWidth=".8" /><path d="M18 1L5 8l3 3-5 8 14-9-4.500-2z" fill="#f5a327" stroke="#6e3b06" /></>],
  ["GOM Player", <><rect width="20" height="20" rx="4" fill="#e0402f" /><ellipse cx="10.500" cy="12" rx="5.500" ry="6" fill="#fff" /><circle cx="11.500" cy="11.500" r="2.200" fill="#e0402f" /><circle cx="4" cy="6" r="1.300" fill="#fff" /><circle cx="7" cy="4" r="1.400" fill="#fff" /><circle cx="10.500" cy="3.300" r="1.500" fill="#fff" /><circle cx="14" cy="3.800" r="1.500" fill="#fff" /><circle cx="17" cy="6" r="1.300" fill="#fff" /></>],
  ["Snipping Tool", <><ellipse cx="9.500" cy="8" rx="9.500" ry="5.500" transform="rotate(-20 9.500 8)" fill="#e9e2e6" stroke="#c96a78" strokeWidth="1.300" /><path d="M4 7l11 5M14 3l-1 11" stroke="#777" /><circle cx="13.500" cy="17" r="2" stroke="#2a86d2" strokeWidth="1.500" /><circle cx="17.500" cy="13.500" r="2" stroke="#2a86d2" strokeWidth="1.500" /></>],
];

function AppButton({ icon, label, className = "" }) {
  return (
    <button className={`flex h-full w-[142px] shrink-0 items-center gap-1 border-b-2 border-[#76b2e8] pl-[5px] text-[11px] whitespace-nowrap ${className}`}>
      <Icon size="size-[22px]" box="0 0 22 22">{icon}</Icon>
      <span>{label}</span>
    </button>
  );
}

const camtasiaC = "M17 4H10Q5 4 5 9v4q0 5 5 5h7v-3.500h-6q-2.500 0-2.500-2.500V10q0-2.500 2.500-2.500h6z";

function Taskbar() {
  return (
    <div className="flex h-[37px] shrink-0 items-center bg-linear-to-r from-[#22353f] via-[#1d2e40] to-[#15213c] text-[#f0f2f4]">
      <button aria-label="Start" className="flex w-[45px] justify-center"><Icon><path d="M0 2.500L7 1.500V7.500H0zM8 1.300L16 0v7.500H8zM0 8.500h7v6l-7-1zM8 8.500h8V16l-8-1.300z" fill="#fff" /></Icon></button>
      <button aria-label="Task view" className="flex w-[45px] justify-center"><Icon><path d="M1 4h9v8H1zM1 .5v1.500h9V.5M1 15.500V14h9v1.500M13.500 1v14" stroke="#ddd" strokeWidth="1.200" /><path d="M12 4h3v3h-3z" fill="#ddd" /></Icon></button>
      <button aria-label="Chrome" className="mr-[3px] flex w-[50px] justify-center">
        <Icon size="size-[22px]" box="0 0 22 22">
          <circle cx="11" cy="11" r="10.500" fill="#f6c52c" /><path d="M11 11L1.900 5.700A10.500 10.500 0 0 1 20.500 6.500H11z" fill="#e2453a" /><path d="M1.900 5.700A10.500 10.500 0 0 0 10 21.400L15 13H8z" fill="#2fa553" /><circle cx="11" cy="11" r="5" fill="#fff" /><circle cx="11" cy="11" r="4" fill="#4388ef" />
        </Icon>
      </button>
      <AppButton label="Delik delme, Vida A..." icon={<path d="M2 10C3 4 7 1.500 11.500 1.500c6 0 9 4.500 8.500 11H8c0 5 6 5.500 11 3V19C11 23 3.500 20 4 13c.2-2.500 2-5 5-6.500C5 7 3 8.500 2 10zM8.300 9.500H15c0-4.500-6-4-6.700 0z" fill="#1f86e0" />} />
      <div className="ml-1 flex">
        {pinned.map(([name, art]) => (
          <button key={name} aria-label={name} className="flex w-[46px] justify-center"><Icon size="size-[22px]" box="-1 -1 22 22">{art}</Icon></button>
        ))}
      </div>
      <AppButton className="ml-px basis-[150px] bg-[#4b5b66] pl-[9px]" label="SOLIDWORKS Prem..." icon={<><path d="M0 4l9-4 13 2v14l-10 4H0z" fill="#c3202b" /><path d="M0 4l9-4 13 2-9 4z" fill="#e25b5f" /><path d="M6 15h16v7H6z" fill="#222" /><text x="2" y="12.500" fontSize="9" fontWeight="700" fill="#fff">S</text><text x="11" y="12.500" fontSize="9" fontWeight="700" fill="#fff">W</text><text x="7" y="21" fontSize="6" fontWeight="700" fill="#fff">2016</text></>} />
      <AppButton className="ml-[5px]" label="Camtasia 9" icon={<><path d="M0 0h22v22H0z" fill="#76b82a" /><path d={camtasiaC} fill="#fff" /></>} />
      <AppButton className="ml-[9px]" label="Recording..." icon={<><rect width="22" height="22" rx="2" fill="#ea4f43" /><path d={camtasiaC} fill="#fff" /></>} />
      <div className="ml-auto flex h-full items-center">
        <button aria-label="Hidden icons" className="mr-px w-[22px]"><Icon size="size-3"><path d="M1 12l7-7 7 7" stroke="#fff" strokeWidth="1.700" /></Icon></button>
        <button aria-label="Microphone" className="w-[22px]"><Icon><rect x="4.500" y="0" width="7" height="12" rx="2" fill="#fff" /><path d="M2 10v3h12v-3M8 13v3" stroke="#ccc" /></Icon></button>
        <button aria-label="Skype" className="w-6"><Icon><rect x=".5" y=".5" width="15" height="15" rx="6.500" fill="#13a5e8" /><text x="4.500" y="12" fontSize="11" fontWeight="700" fill="#fff">S</text></Icon></button>
        <button aria-label="Network" className="w-[22px]"><Icon size="size-[14px]"><path d="M2 15A13 13 0 0 1 15 3M5.500 15A9.500 9.500 0 0 1 15 6.500M9 15a6 6 0 0 1 6-5" stroke="#ccc" strokeWidth="1.400" /><path d="M12.500 12.500H15V15h-2.500z" fill="#fff" /></Icon></button>
        <button aria-label="Volume" className="w-5"><Icon><path d="M1 6h3l4-3.500v11L4 10H1z" stroke="#eee" strokeWidth="1.200" /><path d="M10 5.500q1.500 2.500 0 5M12 4q2.500 4 0 8M14 2.500q3.500 5.500 0 11" stroke="#ccc" /></Icon></button>
        <time className="w-[64px] text-center text-[11px] leading-[17px]">09:27<br />8.04.2020</time>
        <button aria-label="Notifications" className="flex w-9 justify-center"><Icon><path d="M1 2h14v10h-4.500L8 14.500 5.500 12H1z" stroke="#fff" strokeWidth="1.200" /></Icon></button>
        <span className="ml-2 h-full w-[3px] border-l border-[#5b6577]" />
      </div>
    </div>
  );
}

export default function App() {
  return (
    <div className="relative flex h-screen w-full flex-col overflow-hidden bg-[#f5f5f5] font-['Open_Sans','Noto_Sans',sans-serif] text-[#1c1c1c]">
      <TitleBar />
      <Ribbon />
      <TabStrip />
      <div className="flex min-h-0 flex-1">
        <SidePanel />
        <Viewport />
      </div>
      <StatusBar />
      <Taskbar />
      <ContextMenu />
      <svg viewBox="0 0 12 18" className="absolute top-[366px] left-[61px] z-30 h-[18px] w-3" aria-hidden="true">
        <path d="M1 1v13.500l3.200-3 2.300 5.500 2.300-1-2.300-5.200H11z" fill="#fff" stroke="#222" />
      </svg>
    </div>
  );
}
